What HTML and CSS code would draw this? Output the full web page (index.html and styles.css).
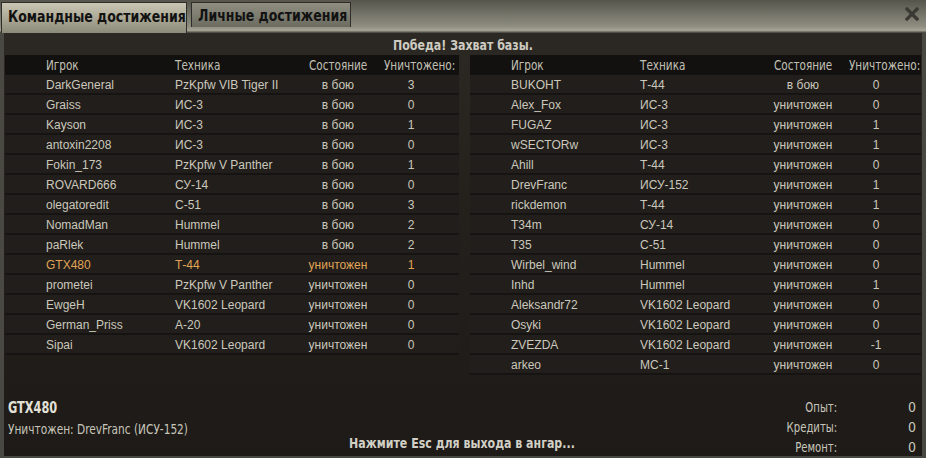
FILE: index.html
```html
<!DOCTYPE html>
<html lang="ru">
  <head>
    <meta charset="UTF-8" />
    <meta name="viewport" content="width=device-width, initial-scale=1.0" />
    <title>Итоги боя</title>
    <link rel="stylesheet" href="styles.css">
  </head>
  <body>
    <div class="window">
      <div class="tabbar">
        <div class="tab tab-team active"><span class="narrow">Командные достижения</span></div>
        <div class="tab tab-self"><span class="narrow">Личные достижения</span></div>
        <div class="close">
          <svg width="16" height="14" viewBox="0 0 16 14">
            <path d="M3 2 L13 12 M13 2 L3 12" stroke="#3a3934" stroke-width="3.2" stroke-linecap="square" />
          </svg>
        </div>
      </div>

      <div class="panel">
        <div class="title"><span class="narrow">Победа! Захват базы.</span></div>

        <div class="teams">
          <div class="team">
            <div class="row head"><span><i>Игрок</i></span><span><i>Техника</i></span><span class="state"><i>Состояние</i></span><span class="kills-head"><i>Уничтожено:</i></span></div>
            <div class="row"><span>DarkGeneral</span><span>PzKpfw VIB Tiger II</span><span class="state">в бою</span><span class="kills">3</span></div>
            <div class="row"><span>Graiss</span><span>ИС-3</span><span class="state">в бою</span><span class="kills">0</span></div>
            <div class="row"><span>Kayson</span><span>ИС-3</span><span class="state">в бою</span><span class="kills">1</span></div>
            <div class="row"><span>antoxin2208</span><span>ИС-3</span><span class="state">в бою</span><span class="kills">0</span></div>
            <div class="row"><span>Fokin_173</span><span>PzKpfw V Panther</span><span class="state">в бою</span><span class="kills">1</span></div>
            <div class="row"><span>ROVARD666</span><span>СУ-14</span><span class="state">в бою</span><span class="kills">0</span></div>
            <div class="row"><span>olegatoredit</span><span>С-51</span><span class="state">в бою</span><span class="kills">3</span></div>
            <div class="row"><span>NomadMan</span><span>Hummel</span><span class="state">в бою</span><span class="kills">2</span></div>
            <div class="row"><span>paRlek</span><span>Hummel</span><span class="state">в бою</span><span class="kills">2</span></div>
            <div class="row me"><span>GTX480</span><span>Т-44</span><span class="state">уничтожен</span><span class="kills">1</span></div>
            <div class="row"><span>prometei</span><span>PzKpfw V Panther</span><span class="state">уничтожен</span><span class="kills">0</span></div>
            <div class="row"><span>EwgeH</span><span>VK1602 Leopard</span><span class="state">уничтожен</span><span class="kills">0</span></div>
            <div class="row"><span>German_Priss</span><span>А-20</span><span class="state">уничтожен</span><span class="kills">0</span></div>
            <div class="row"><span>Sipai</span><span>VK1602 Leopard</span><span class="state">уничтожен</span><span class="kills">0</span></div>
          </div>

          <div class="team">
            <div class="row head"><span><i>Игрок</i></span><span><i>Техника</i></span><span class="state"><i>Состояние</i></span><span class="kills-head"><i>Уничтожено:</i></span></div>
            <div class="row"><span>BUKOHT</span><span>Т-44</span><span class="state">в бою</span><span class="kills">0</span></div>
            <div class="row"><span>Alex_Fox</span><span>ИС-3</span><span class="state">уничтожен</span><span class="kills">0</span></div>
            <div class="row"><span>FUGAZ</span><span>ИС-3</span><span class="state">уничтожен</span><span class="kills">1</span></div>
            <div class="row"><span>wSECTORw</span><span>ИС-3</span><span class="state">уничтожен</span><span class="kills">1</span></div>
            <div class="row"><span>Ahill</span><span>Т-44</span><span class="state">уничтожен</span><span class="kills">0</span></div>
            <div class="row"><span>DrevFranc</span><span>ИСУ-152</span><span class="state">уничтожен</span><span class="kills">1</span></div>
            <div class="row"><span>rickdemon</span><span>Т-44</span><span class="state">уничтожен</span><span class="kills">1</span></div>
            <div class="row"><span>T34m</span><span>СУ-14</span><span class="state">уничтожен</span><span class="kills">0</span></div>
            <div class="row"><span>T35</span><span>С-51</span><span class="state">уничтожен</span><span class="kills">0</span></div>
            <div class="row"><span>Wirbel_wind</span><span>Hummel</span><span class="state">уничтожен</span><span class="kills">0</span></div>
            <div class="row"><span>Inhd</span><span>Hummel</span><span class="state">уничтожен</span><span class="kills">1</span></div>
            <div class="row"><span>Aleksandr72</span><span>VK1602 Leopard</span><span class="state">уничтожен</span><span class="kills">0</span></div>
            <div class="row"><span>Osyki</span><span>VK1602 Leopard</span><span class="state">уничтожен</span><span class="kills">0</span></div>
            <div class="row"><span>ZVEZDA</span><span>VK1602 Leopard</span><span class="state">уничтожен</span><span class="kills">-1</span></div>
            <div class="row"><span>arkeo</span><span>МС-1</span><span class="state">уничтожен</span><span class="kills">0</span></div>
          </div>
        </div>

        <div class="footer">
          <div class="player">
            <div class="player-name"><span class="narrow">GTX480</span></div>
            <div class="player-fate"><span class="narrow">Уничтожен: DrevFranc (ИСУ-152)</span></div>
          </div>
          <div class="hint"><span class="narrow">Нажмите Esc для выхода в ангар...</span></div>
          <div class="totals">
            <span class="narrow">Опыт:</span><span>0</span>
            <span class="narrow">Кредиты:</span><span>0</span>
            <span class="narrow">Ремонт:</span><span>0</span>
          </div>
        </div>
      </div>
    </div>
  </body>
</html>
```

FILE: styles.css
```css
body {
  margin: 0;
  background-color: #1b1916;
  font-family: "Liberation Sans", Arial, sans-serif;
}
/* the game uses a narrow font, DejaVu Condensed squeezed a bit more */
.narrow,
.head i {
  display: inline-block;
  font-style: normal;
  white-space: nowrap;
  transform-origin: left center;
}
.window {
  width: 926px;
  height: 458px;
  display: flex;
  flex-direction: column;
  background-color: #4a4842;
  overflow: hidden;
}
.tabbar {
  height: 33px;
  flex-shrink: 0;
  display: flex;
  align-items: flex-start;
  gap: 4px;
  padding-left: 1px;
  box-sizing: border-box;
  background: linear-gradient(#56554c 0%, #76756a 45%, #8e8d80 80%, #a6a595 92%, #3c3b35 100%);
}
.tab {
  margin-top: 2px;
  height: 25px;
  padding: 0 6px;
  display: flex;
  align-items: center;
  box-sizing: border-box;
  border: 1px solid #2e2d29;
  border-bottom: none;
  background: linear-gradient(#8f8e81, #6c6b60);
  color: #121212;
  font-family: "DejaVu Sans Condensed", "DejaVu Sans", sans-serif;
  font-weight: bold;
  font-size: 16px;
  overflow: hidden;
}
.tab .narrow {
  transform: scaleX(0.87);
}
.tab-team {
  width: 186px;
}
.tab-self {
  width: 160px;
}
.tab.active {
  height: 31px;
  padding: 0 6px 3px;
  background: linear-gradient(#c9c6b3, #a9a693 55%, #8c8a7a);
}
.close {
  margin-left: auto;
  margin-right: 6px;
  margin-top: 7px;
  line-height: 0;
}
.panel {
  flex: 1;
  margin: 0 4px 2px;
  display: flex;
  flex-direction: column;
  background: linear-gradient(#2c2925 0%, #24211d 40%, #1d1a17 100%);
  color: #cbc8bc;
}
.title {
  height: 22px;
  line-height: 24px;
  text-align: center;
  font-family: "DejaVu Sans Condensed", "DejaVu Sans", sans-serif;
  font-weight: bold;
  font-size: 14px;
  color: #cdcbc0;
}
.title .narrow,
.hint .narrow {
  transform-origin: center;
  transform: scaleX(0.875);
}
.teams {
  display: grid;
  grid-template-columns: 454px 451px;
  gap: 11px;
  padding: 0 1px;
  align-items: start;
}
.row {
  display: grid;
  grid-template-columns: 129px 117px 92px 54px 1fr;
  padding-left: 41px;
  height: 20px;
  line-height: 20px;
  box-sizing: border-box;
  background-color: #211e1b;
  border-bottom: 2px solid #161412;
  font-size: 12px;
  white-space: nowrap;
}
.row.head {
  background-color: #121110;
  border-bottom: none;
  font-family: "DejaVu Sans Condensed", "DejaVu Sans", sans-serif;
  font-size: 14px;
  color: #c2c0b5;
}
.head i {
  transform: scaleX(0.83);
}
.head .state i {
  transform-origin: center;
}
.row.me {
  color: #e0a557;
}
.state,
.kills {
  text-align: center;
}
.kills-head {
  grid-column: span 2;
}
.footer {
  flex: 1;
  display: grid;
  grid-template-columns: 1fr auto 1fr;
  align-items: end;
  padding: 0 6px 0 4px;
  font-family: "DejaVu Sans Condensed", "DejaVu Sans", sans-serif;
  font-size: 14px;
  color: #c8c6bb;
}
.player {
  line-height: 21px;
  margin-bottom: 16px;
}
.player .narrow {
  transform: scaleX(0.84);
}
.player-name {
  font-weight: bold;
  font-size: 15px;
  color: #e3e1d7;
}
.hint {
  font-weight: bold;
  line-height: 20px;
  margin-bottom: 3px;
  color: #d2d0c5;
}
.totals {
  justify-self: end;
  display: grid;
  grid-template-columns: auto 79px;
  line-height: 20px;
  margin-bottom: -1px;
  text-align: right;
}
.totals .narrow {
  transform-origin: right center;
  transform: scaleX(0.8);
}
```
